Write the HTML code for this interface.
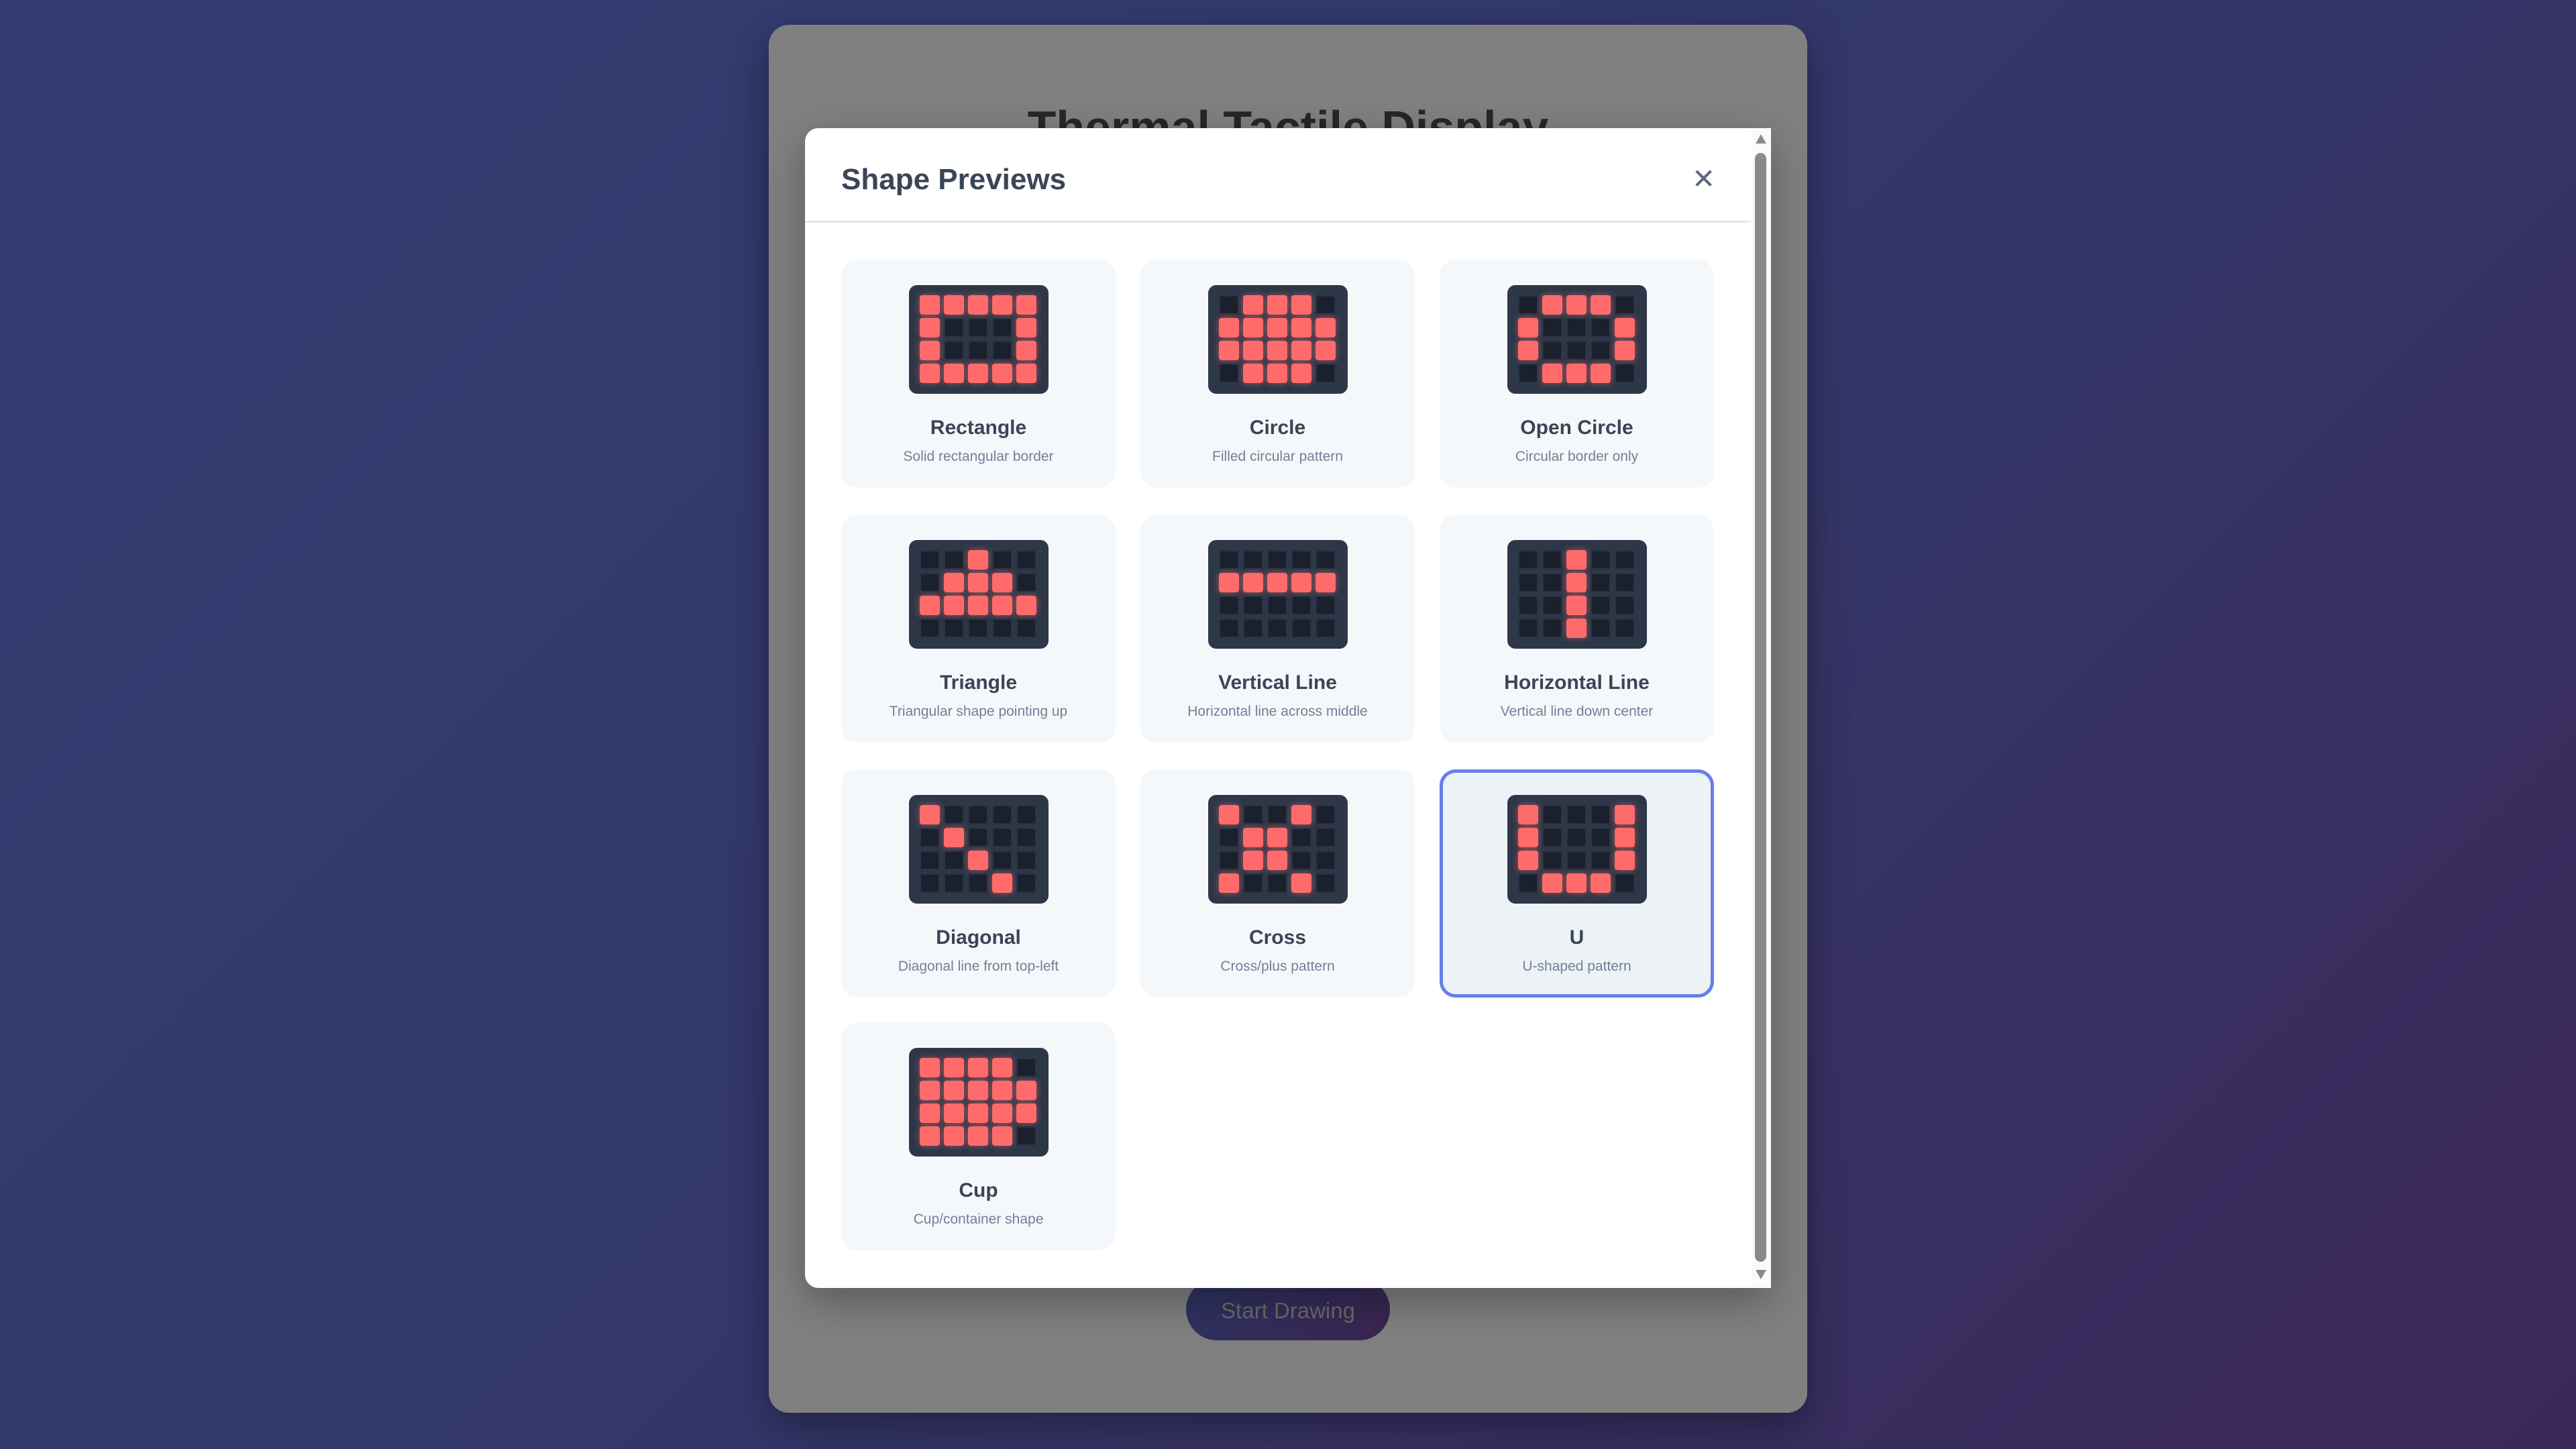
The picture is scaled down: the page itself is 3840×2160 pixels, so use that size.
<!DOCTYPE html>
<html><head><meta charset="utf-8"><style>
html,body{margin:0;padding:0}
body{width:3840px;height:2160px;overflow:hidden;position:relative;background:linear-gradient(135deg,#333d72 0%,#33376a 50%,#3c2858 100%);font-family:"Liberation Sans",sans-serif}
.outer{position:absolute;left:1146px;top:37px;width:1548px;height:2069px;background:#808080;border-radius:30px;box-shadow:0 20px 60px rgba(0,0,0,.35)}
.ttl{position:absolute;left:0;right:0;top:150px;text-align:center;font-size:70px;font-weight:bold;color:#272727;font-family:"Liberation Sans",sans-serif}
.btn{position:absolute;left:1768px;top:1906px;width:304px;height:92px;border-radius:46px;background:linear-gradient(135deg,#2c3462,#3b2550);color:#6a6a6a;font-size:33px;text-align:center;line-height:96px}
.modal{position:absolute;left:1200px;top:191px;width:1440px;height:1729px;background:#fff;border-radius:20px 0 0 20px;overflow:hidden;box-shadow:0 20px 60px rgba(0,0,0,.3)}
.hdr{position:absolute;left:1254px;top:243px;font-size:44px;font-weight:bold;color:#3a4556;font-family:"Liberation Sans",sans-serif}
.x{position:absolute;left:2522px;top:242px;font-size:42px;color:#5f6b7d;font-family:"DejaVu Sans",sans-serif}
.div{position:absolute;left:1200px;top:329px;width:1410px;height:3px;background:#e2e8f0}
.sb{position:absolute;left:2611px;top:191px;width:29px;height:1729px;background:#fafafa}
.thumb{position:absolute;left:2616px;top:228px;width:17px;height:1653px;background:#8a8a8a;border-radius:9px}
.card{position:absolute;width:409px;height:340px;background:#f5f8fb;border-radius:24px;box-sizing:border-box}
.card.sel{background:#edf2f7;border:5px solid #667eea}
.g{position:absolute;left:101px;top:38px;width:208px;height:162px;background:#2d3748;border-radius:12px;box-sizing:border-box;padding:15px 16px;display:grid;grid-template-columns:repeat(5,30px);grid-template-rows:repeat(4,29px);column-gap:6px;row-gap:5px}
.sel .g{left:96px;top:33px}
.g i{display:block;border-radius:4px;background:#1a202c;box-shadow:inset 0 0 0 2px #2a3344}
.g i.on{background:#ff6b6b;box-shadow:0 0 10px rgba(255,107,107,.55)}
.n{position:absolute;left:0;right:0;top:234px;text-align:center;font-size:30px;font-weight:bold;color:#3a4556;font-family:"Liberation Sans",sans-serif}
.d{position:absolute;left:0;right:0;top:282px;text-align:center;font-size:21px;color:#718096;font-family:"Liberation Sans",sans-serif}
.sel .n{top:229px}.sel .d{top:277px}
.arr{position:absolute;left:2617px;width:0;height:0;border-left:8px solid transparent;border-right:8px solid transparent}
</style></head><body>
<div class="outer"></div>
<div class="ttl">Thermal Tactile Display</div>
<div class="btn">Start Drawing</div>
<div class="modal"></div>
<div class="hdr">Shape Previews</div>
<div class="x">✕</div>
<div class="div"></div>
<div class="sb"></div>
<div class="thumb"></div>
<div class="arr" style="top:200px;border-bottom:14px solid #8a8a8a"></div>
<div class="arr" style="top:1893px;border-top:14px solid #8a8a8a"></div>
<div class="card" style="left:1254px;top:387px"><div class="g"><i class="on"></i><i class="on"></i><i class="on"></i><i class="on"></i><i class="on"></i><i class="on"></i><i></i><i></i><i></i><i class="on"></i><i class="on"></i><i></i><i></i><i></i><i class="on"></i><i class="on"></i><i class="on"></i><i class="on"></i><i class="on"></i><i class="on"></i></div><div class="n">Rectangle</div><div class="d">Solid rectangular border</div></div>
<div class="card" style="left:1700px;top:387px"><div class="g"><i></i><i class="on"></i><i class="on"></i><i class="on"></i><i></i><i class="on"></i><i class="on"></i><i class="on"></i><i class="on"></i><i class="on"></i><i class="on"></i><i class="on"></i><i class="on"></i><i class="on"></i><i class="on"></i><i></i><i class="on"></i><i class="on"></i><i class="on"></i><i></i></div><div class="n">Circle</div><div class="d">Filled circular pattern</div></div>
<div class="card" style="left:2146px;top:387px"><div class="g"><i></i><i class="on"></i><i class="on"></i><i class="on"></i><i></i><i class="on"></i><i></i><i></i><i></i><i class="on"></i><i class="on"></i><i></i><i></i><i></i><i class="on"></i><i></i><i class="on"></i><i class="on"></i><i class="on"></i><i></i></div><div class="n">Open Circle</div><div class="d">Circular border only</div></div>
<div class="card" style="left:1254px;top:767px"><div class="g"><i></i><i></i><i class="on"></i><i></i><i></i><i></i><i class="on"></i><i class="on"></i><i class="on"></i><i></i><i class="on"></i><i class="on"></i><i class="on"></i><i class="on"></i><i class="on"></i><i></i><i></i><i></i><i></i><i></i></div><div class="n">Triangle</div><div class="d">Triangular shape pointing up</div></div>
<div class="card" style="left:1700px;top:767px"><div class="g"><i></i><i></i><i></i><i></i><i></i><i class="on"></i><i class="on"></i><i class="on"></i><i class="on"></i><i class="on"></i><i></i><i></i><i></i><i></i><i></i><i></i><i></i><i></i><i></i><i></i></div><div class="n">Vertical Line</div><div class="d">Horizontal line across middle</div></div>
<div class="card" style="left:2146px;top:767px"><div class="g"><i></i><i></i><i class="on"></i><i></i><i></i><i></i><i></i><i class="on"></i><i></i><i></i><i></i><i></i><i class="on"></i><i></i><i></i><i></i><i></i><i class="on"></i><i></i><i></i></div><div class="n">Horizontal Line</div><div class="d">Vertical line down center</div></div>
<div class="card" style="left:1254px;top:1147px"><div class="g"><i class="on"></i><i></i><i></i><i></i><i></i><i></i><i class="on"></i><i></i><i></i><i></i><i></i><i></i><i class="on"></i><i></i><i></i><i></i><i></i><i></i><i class="on"></i><i></i></div><div class="n">Diagonal</div><div class="d">Diagonal line from top-left</div></div>
<div class="card" style="left:1700px;top:1147px"><div class="g"><i class="on"></i><i></i><i></i><i class="on"></i><i></i><i></i><i class="on"></i><i class="on"></i><i></i><i></i><i></i><i class="on"></i><i class="on"></i><i></i><i></i><i class="on"></i><i></i><i></i><i class="on"></i><i></i></div><div class="n">Cross</div><div class="d">Cross/plus pattern</div></div>
<div class="card sel" style="left:2146px;top:1147px"><div class="g"><i class="on"></i><i></i><i></i><i></i><i class="on"></i><i class="on"></i><i></i><i></i><i></i><i class="on"></i><i class="on"></i><i></i><i></i><i></i><i class="on"></i><i></i><i class="on"></i><i class="on"></i><i class="on"></i><i></i></div><div class="n">U</div><div class="d">U-shaped pattern</div></div>
<div class="card" style="left:1254px;top:1524px"><div class="g"><i class="on"></i><i class="on"></i><i class="on"></i><i class="on"></i><i></i><i class="on"></i><i class="on"></i><i class="on"></i><i class="on"></i><i class="on"></i><i class="on"></i><i class="on"></i><i class="on"></i><i class="on"></i><i class="on"></i><i class="on"></i><i class="on"></i><i class="on"></i><i class="on"></i><i></i></div><div class="n">Cup</div><div class="d">Cup/container shape</div></div>
</body></html>
